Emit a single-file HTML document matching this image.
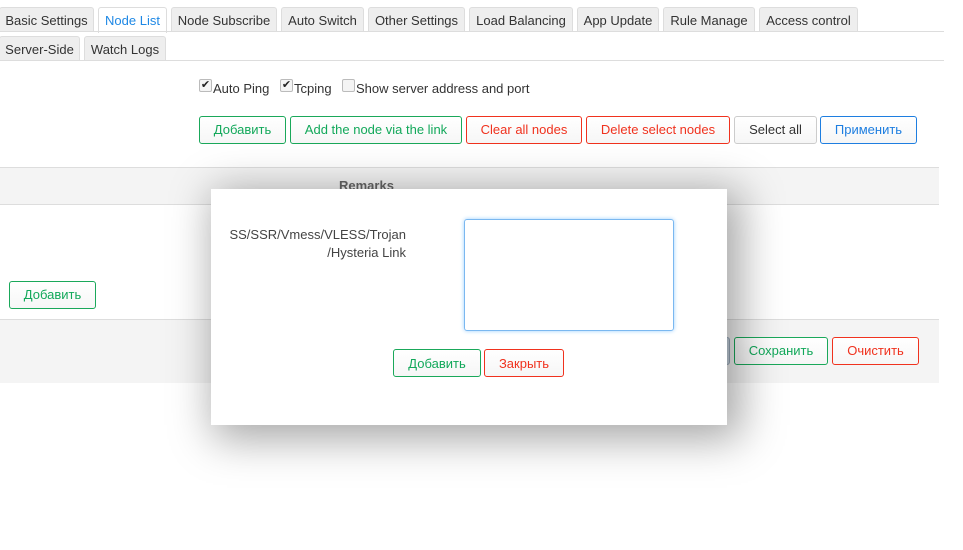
<!DOCTYPE html>
<html><head><meta charset="utf-8"><style>
*{box-sizing:border-box;margin:0;padding:0}
body{width:963px;height:550px;background:#fff;font-family:"Liberation Sans",sans-serif;font-size:13px;color:#333;position:relative;overflow:hidden}
.a{position:absolute}
.tab{position:absolute;height:25px;border:1px solid #ddd;border-bottom:none;background:#eee;border-radius:3px 3px 0 0;text-align:center;line-height:25px;color:#333}
.tab.on{background:#fff;color:#1e88e5;height:26px}
.btn{position:absolute;height:28px;border:1px solid;border-radius:3px;background:linear-gradient(#fff,#f6f6f6);text-align:center;line-height:26px;font-size:13px}
.g{border-color:#1aa85a;color:#12a85a}
.r{border-color:#f0321e;color:#f0321e}
.n{border-color:#ccc;color:#333}
.b{border-color:#1e7ee0;color:#1e7ee0}
.cb{position:absolute;width:13px;height:13px;border:1px solid #bbb;border-radius:2px;background:#f4f4f4;font-size:11px;line-height:10px;text-align:center;color:#222}
</style></head><body>
<div class="tab" style="left:-1px;top:7px;width:95px">Basic Settings</div>
<div class="tab on" style="left:98px;top:7px;width:69px">Node List</div>
<div class="tab" style="left:171px;top:7px;width:106px">Node Subscribe</div>
<div class="tab" style="left:281px;top:7px;width:83px">Auto Switch</div>
<div class="tab" style="left:368px;top:7px;width:97px">Other Settings</div>
<div class="tab" style="left:469px;top:7px;width:104px">Load Balancing</div>
<div class="tab" style="left:577px;top:7px;width:82px">App Update</div>
<div class="tab" style="left:663px;top:7px;width:92px">Rule Manage</div>
<div class="tab" style="left:759px;top:7px;width:99px">Access control</div>
<div class="a" style="left:0;top:31px;width:944px;height:1px;background:#ddd"></div>
<div class="tab" style="left:-1px;top:36px;width:81px">Server-Side</div>
<div class="tab" style="left:84px;top:36px;width:82px">Watch Logs</div>
<div class="a" style="left:0;top:60px;width:944px;height:1px;background:#ddd"></div>

<div class="cb" style="left:199px;top:79px">✔</div><div class="a" style="left:213px;top:81px">Auto Ping</div>
<div class="cb" style="left:280px;top:79px">✔</div><div class="a" style="left:294px;top:81px">Tcping</div>
<div class="cb" style="left:342px;top:79px"></div><div class="a" style="left:356px;top:81px">Show server address and port</div>

<div class="btn g" style="left:199px;top:116px;width:87px">Добавить</div>
<div class="btn g" style="left:290px;top:116px;width:172px">Add the node via the link</div>
<div class="btn r" style="left:466px;top:116px;width:116px">Clear all nodes</div>
<div class="btn r" style="left:586px;top:116px;width:144px">Delete select nodes</div>
<div class="btn n" style="left:734px;top:116px;width:83px">Select all</div>
<div class="btn b" style="left:820px;top:116px;width:97px">Применить</div>

<div class="a" style="left:0;top:167px;width:939px;height:38px;background:#f4f4f4;border-top:1px solid #ddd;border-bottom:1px solid #ddd"></div>
<div class="a" style="left:339px;top:178px;font-weight:bold;color:#666">Remarks</div>
<div class="btn g" style="left:9px;top:281px;width:87px">Добавить</div>
<div class="a" style="left:0;top:319px;width:939px;height:64px;background:#f4f4f4;border-top:1px solid #ddd"></div>
<div class="btn" style="left:700px;top:337px;width:30px;border-color:#9ab;background:#c8d4e0"></div>
<div class="btn g" style="left:734px;top:337px;width:94px">Сохранить</div>
<div class="btn r" style="left:832px;top:337px;width:87px">Очистить</div>

<div class="a" style="left:211px;top:189px;width:516px;height:236px;background:#fff;box-shadow:8px 8px 40px 6px rgba(0,0,0,.35)"></div>
<div class="a" style="left:210px;top:226px;width:196px;text-align:right;line-height:18px;color:#444">SS/SSR/Vmess/VLESS/Trojan<br>/Hysteria Link</div>
<div class="a" style="left:464px;top:219px;width:210px;height:112px;border:1px solid #7ab8f0;border-radius:3px;box-shadow:0 0 4px #9cd0ff"></div>
<div class="btn g" style="left:393px;top:349px;width:88px;line-height:27px">Добавить</div>
<div class="btn r" style="left:484px;top:349px;width:80px;line-height:27px">Закрыть</div>
</body></html>
